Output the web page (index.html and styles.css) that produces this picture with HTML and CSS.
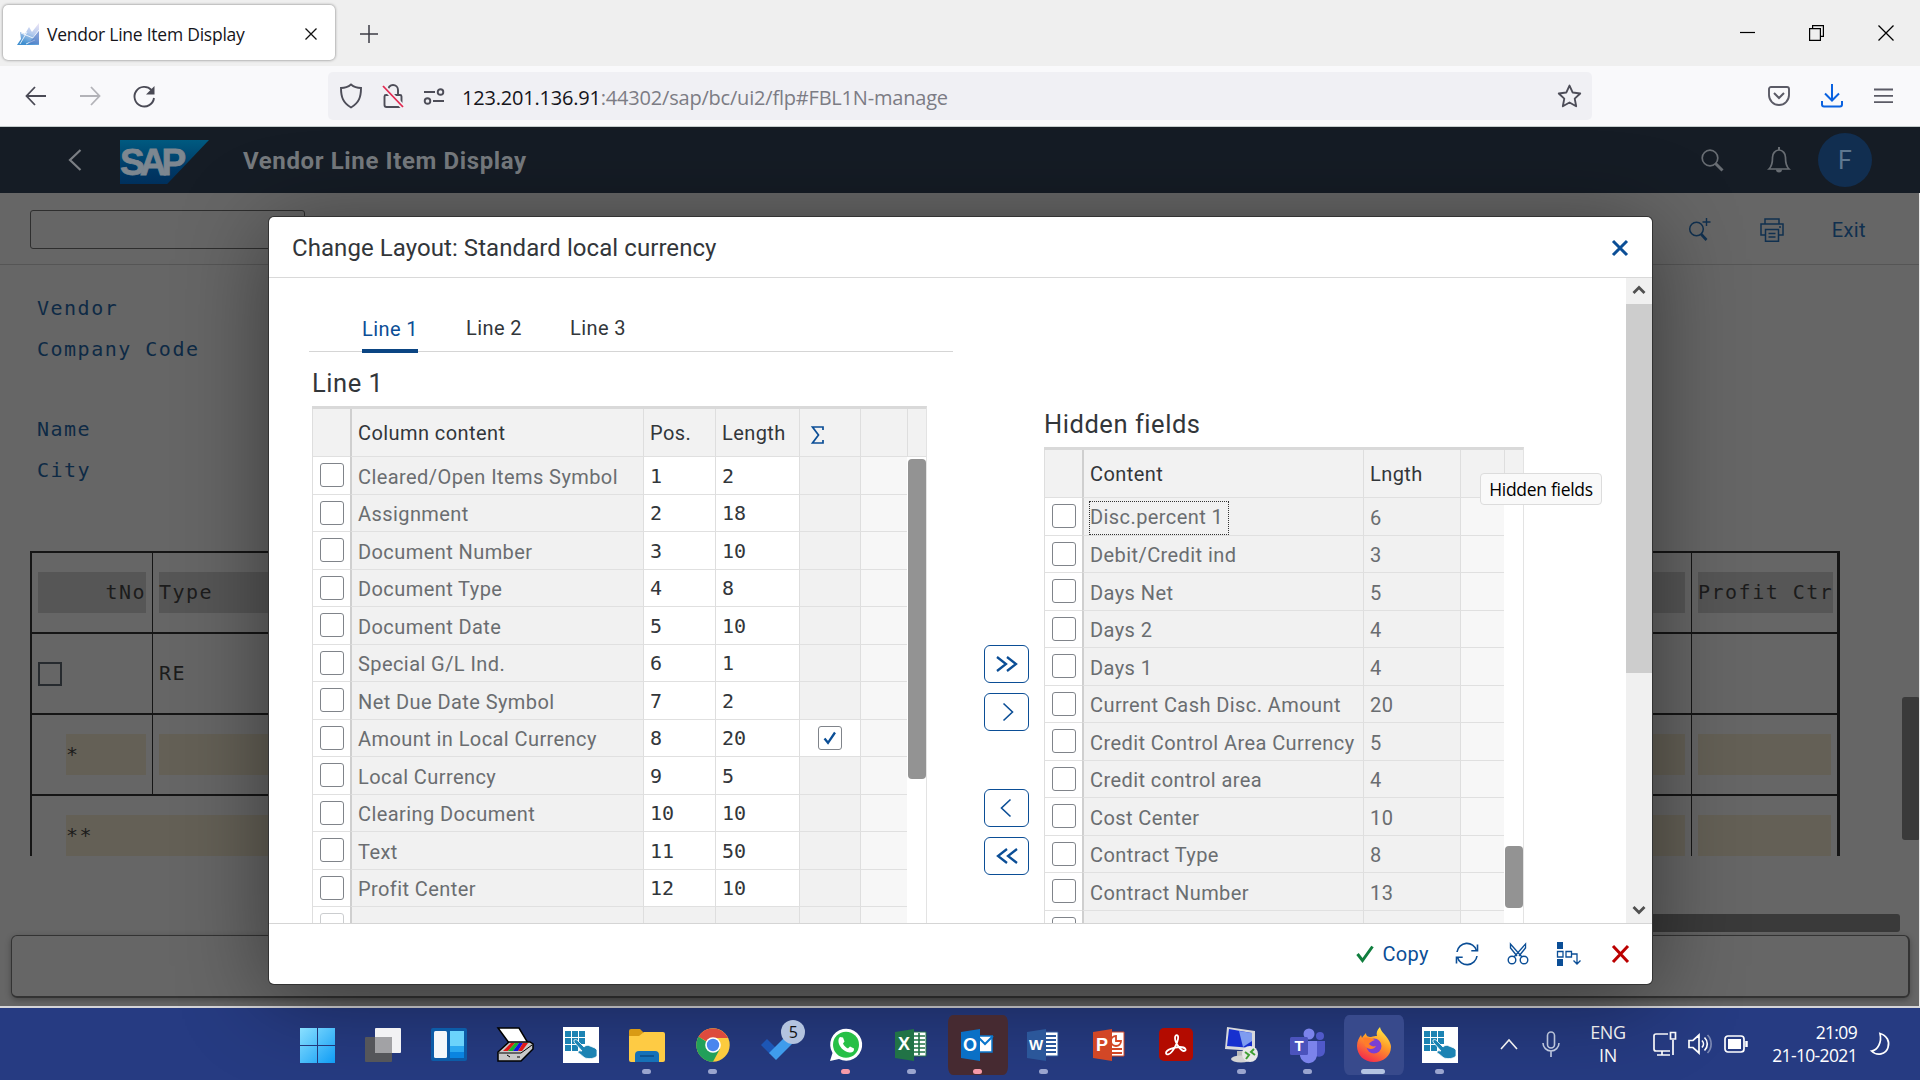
FILE: index.html
```html
<!DOCTYPE html>
<html lang="en">
<head>
<meta charset="utf-8">
<title>Vendor Line Item Display</title>
<link rel="stylesheet" href="styles.css">
</head>
<body>
<div class="tabstrip">
  <div class="tab">
    <svg class="favicon" width="24" height="22" viewBox="0 0 24 22"><defs><linearGradient id="fav" x1="0.9" y1="0" x2="0.5" y2="1"><stop offset="0" stop-color="#e9e2f5"/><stop offset=".5" stop-color="#b4cbee"/><stop offset="1" stop-color="#3f8fd0"/></linearGradient></defs><path d="M23 0v22H1l4-6-1-7 5 2 4-7 3 5z" fill="url(#fav)"/><path d="M4 21 11 9M5 10l12 5 6-8M10 21l9-4" fill="none" stroke="#fff" opacity=".8"/><path d="M23 8v13H12z" fill="#4a6fc0" opacity=".5"/></svg>
    <span class="tab-title">Vendor Line Item Display</span>
    <svg width="12" height="12" viewBox="0 0 12 12"><path d="M.5.5l11 11M11.500.5l-11 11" stroke="#111" stroke-width="1.3"/></svg>
  </div>
  <svg class="newtab" width="18" height="18" viewBox="0 0 18 18"><path d="M9 0v18M0 9h18" stroke="#3c3c46" stroke-width="1.5"/></svg>
  <div class="winbtns">
    <svg width="15" height="16" viewBox="0 0 15 16"><path d="M0 7.500h15" stroke="#000" stroke-width="1.200"/></svg>
    <svg width="15" height="16" viewBox="0 0 15 16"><path d="M.6 3.600h10.800v11.800H.6zM3.600 3.600V.6h10.800v10.800h-3" fill="none" stroke="#000" stroke-width="1.200"/></svg>
    <svg width="16" height="16" viewBox="0 0 16 16"><path d="M.5.5l15 15M15.500.5l-15 15" stroke="#000" stroke-width="1.300"/></svg>
  </div>
</div>
<div class="navbar">
  <svg width="22" height="20" viewBox="0 0 22 20" class="nav-ico"><path d="M21 10H1.500M10 1 1.500 10l8.500 9" fill="none" stroke="#4a4a55" stroke-width="1.800"/></svg>
  <svg width="22" height="20" viewBox="0 0 22 20" class="nav-ico faded"><path d="M1 10h19.500M12 1l8.500 9-8.500 9" fill="none" stroke="#4a4a55" stroke-width="1.800"/></svg>
  <svg width="24" height="24" viewBox="0 0 24 24" class="nav-ico reload"><path d="M18.500 5A9.800 9.800 0 1 0 21 13" fill="none" stroke="#4a4a55" stroke-width="1.900"/><path d="M21.500 1v8.500H13z" fill="#4a4a55"/></svg>
  <div class="urlbar">
    <svg width="24" height="26" viewBox="0 0 24 26"><path d="M12 1.500C9 4 5.500 5 2 5c0 9 2 15 10 19.500C20 20 22 14 22 5 18.500 5 15 4 12 1.500z" fill="none" stroke="#4d4d58" stroke-width="1.900"/></svg>
    <svg width="22" height="26" viewBox="0 0 22 26"><path d="M4 12h14a1.500 1.500 0 0 1 1.500 1.500V22a2 2 0 0 1-2 2H4.500a2 2 0 0 1-2-2v-8.500A1.500 1.500 0 0 1 4 12zM6 12V7a5 5 0 0 1 10 0v5" fill="none" stroke="#4d4d58" stroke-width="1.900"/><path d="M1 3l20 21" stroke="#f0f0f4" stroke-width="5"/><path d="M1 3l20 21" stroke="#e22850" stroke-width="1.800"/></svg>
    <svg width="22" height="18" viewBox="0 0 22 18"><g fill="none" stroke="#4d4d58" stroke-width="1.900"><path d="M1 5h11M10 14h11"/><circle cx="17.500" cy="5" r="2.800"/><circle cx="4.500" cy="14" r="2.800"/></g></svg>
    <div class="url"><b>123.201.136.91</b>:44302/sap/bc/ui2/flp#FBL1N-manage</div>
    <svg width="25" height="25" viewBox="0 0 24 24"><path d="M12 1.500l3.100 6.700 7.200.9-5.300 5 1.400 7.300L12 17.800l-6.400 3.600L7 14.100l-5.300-5 7.200-.9z" fill="none" stroke="#4d4d58" stroke-width="1.800" stroke-linejoin="round"/></svg>
  </div>
  <div class="nav-right">
    <svg width="22" height="20" viewBox="0 0 22 20"><path d="M3 1h16a2 2 0 0 1 2 2v6a10 10 0 0 1-20 0V3a2 2 0 0 1 2-2z" fill="none" stroke="#5b5b66" stroke-width="1.900"/><path d="M6 7l5 5 5-5" fill="none" stroke="#5b5b66" stroke-width="2"/></svg>
    <svg width="22" height="24" viewBox="0 0 22 24"><path d="M11 0v16M4 9.500l7 7 7-7M1 17v3.500a2 2 0 0 0 2 2h16a2 2 0 0 0 2-2V17" fill="none" stroke="#0a62e0" stroke-width="2"/></svg>
    <svg width="19" height="16" viewBox="0 0 19 16"><path d="M0 1.500h19M0 7.800h19M0 14.200h19" stroke="#5b5b66" stroke-width="1.800"/></svg>
  </div>
</div>

<div class="shell">
  <svg class="back" width="14" height="22" viewBox="0 0 14 22"><path d="M12.500 1 2 11l10.500 10" fill="none" stroke="#7b7f84" stroke-width="2.200"/></svg>
  <div class="logo"><span>SAP</span></div>
  <div class="shell-title">Vendor Line Item Display</div>
  <div class="shell-right">
    <svg width="24" height="24" viewBox="0 0 24 24"><circle cx="10" cy="10" r="7.800" fill="none" stroke="#686d73" stroke-width="1.700"/><path d="M15.500 15.500l7 7" stroke="#686d73" stroke-width="3"/></svg>
    <svg width="22" height="26" viewBox="0 0 22 26"><path d="M1 22h20c-3-3-3.500-6-3.500-11A6.500 7.500 0 0 0 11 3a6.500 7.500 0 0 0-6.500 8c0 5-.5 8-3.500 11z" fill="none" stroke="#686d73" stroke-width="1.700"/><path d="M11 0v3" stroke="#686d73" stroke-width="2"/><path d="M8 22.500h6a3 3 0 0 1-6 0z" fill="#686d73"/></svg>
    <div class="avatar">F</div>
  </div>
</div>

<div class="page">
  <div class="toolbar">
    <div class="cmd"></div>
    <div class="tools">
      <svg width="24" height="24" viewBox="0 0 24 24"><circle cx="8.500" cy="11" r="6.800" fill="none" stroke="#10304f" stroke-width="1.500"/><path d="M13 16l5.500 6" stroke="#10304f" stroke-width="2.600"/><path d="M18.500 0v8M14.500 4h8" stroke="#10304f" stroke-width="1.400"/></svg>
      <svg width="24" height="24" viewBox="0 0 24 24"><g fill="none" stroke="#10304f" stroke-width="1.500"><path d="M5 6V1h14v5M5 17H1V6h22v11h-4"/><path d="M5.500 11.500h13v11.700h-13zM8.500 15.500h7M8.500 19h7M19 9h2"/></g></svg>
      <span class="exit">Exit</span>
    </div>
  </div>
  <div class="form">
    <span>Vendor</span><span>Company Code</span><span></span><span>Name</span><span>City</span>
  </div>
  <div class="list">
    <div class="lrow"><div class="lc"><i class="chip head r">tNo</i></div><div class="lc"><i class="chip head">Type</i></div><div class="lc"><i class="chip head">Profit Ctr</i></div></div>
    <div class="lrow"><div class="lc"><i class="sq"></i></div><div class="lc"><i class="chip">RE</i></div><div class="lc"></div></div>
    <div class="lrow"><div class="lc in"><i class="chip sum">*</i></div><div class="lc"><i class="chip sum"></i></div><div class="lc"><i class="chip sum"></i></div></div>
    <div class="lrow last"><div class="lc in"><i class="chip sum">**</i></div><div class="lc"><i class="chip sum"></i></div></div>
  </div>
  <div class="hscroll"></div>
  <div class="msgbar"></div>
  <div class="vscroll"></div>
</div>

<div class="dialog">
  <div class="dlg-head"><span>Change Layout: Standard local currency</span>
    <svg width="18" height="18" viewBox="0 0 18 18"><path d="M2 2l14 14M16 2 2 16" stroke="#0b4e96" stroke-width="3"/></svg>
  </div>
  <div class="dlg-body">
    <div class="left">
      <div class="tabs"><span class="on">Line 1</span><span>Line 2</span><span>Line 3</span></div>
      <h2>Line 1</h2>
      <div class="tbl tl">
        <div class="row hd"><i></i><b>Column content</b><b>Pos.</b><b>Length</b><b class="sig"><svg width="13" height="18" viewBox="0 0 13 18"><path d="M12 4V1H1.500l6 8-6 8H12v-3" fill="none" stroke="#0b4e96" stroke-width="1.700"/></svg></b><b></b><b></b></div>
        <div class="row"><i><u></u></i><em>Cleared/Open Items Symbol</em><s>1</s><s>2</s><em></em><q></q></div>
        <div class="row"><i><u></u></i><em>Assignment</em><s>2</s><s>18</s><em></em><q></q></div>
        <div class="row"><i><u></u></i><em>Document Number</em><s>3</s><s>10</s><em></em><q></q></div>
        <div class="row"><i><u></u></i><em>Document Type</em><s>4</s><s>8</s><em></em><q></q></div>
        <div class="row"><i><u></u></i><em>Document Date</em><s>5</s><s>10</s><em></em><q></q></div>
        <div class="row"><i><u></u></i><em>Special G/L Ind.</em><s>6</s><s>1</s><em></em><q></q></div>
        <div class="row"><i><u></u></i><em>Net Due Date Symbol</em><s>7</s><s>2</s><em></em><q></q></div>
        <div class="row"><i><u></u></i><em>Amount in Local Currency</em><s>8</s><s>20</s><i class="chk"><u><svg width="14" height="14" viewBox="0 0 14 14"><path d="M1.500 7.500l3.500 4.300L12 1.500" fill="none" stroke="#0b4e96" stroke-width="2.300"/></svg></u></i><q></q></div>
        <div class="row"><i><u></u></i><em>Local Currency</em><s>9</s><s>5</s><em></em><q></q></div>
        <div class="row"><i><u></u></i><em>Clearing Document</em><s>10</s><s>10</s><em></em><q></q></div>
        <div class="row"><i><u></u></i><em>Text</em><s>11</s><s>50</s><em></em><q></q></div>
        <div class="row"><i><u></u></i><em>Profit Center</em><s>12</s><s>10</s><em></em><q></q></div>
        <div class="row off"><i><u></u></i><em></em><em></em><em></em><em></em><q></q></div>
        <div class="thumb t1"></div>
      </div>
    </div>
    <div class="mover">
      <div class="mbtn"><svg width="22" height="16" viewBox="0 0 22 16"><path d="M1 1l9 7-9 7M11 1l9 7-9 7" fill="none" stroke="#0b4e96" stroke-width="2.300"/></svg></div>
      <div class="mbtn"><svg width="12" height="18" viewBox="0 0 12 18"><path d="M2.500.5l9 8.500-9 8.500" fill="none" stroke="#0b4e96" stroke-width="1.600"/></svg></div>
      <div class="mbtn gap"><svg width="12" height="18" viewBox="0 0 12 18"><path d="M9.500.5l-9 8.500 9 8.500" fill="none" stroke="#0b4e96" stroke-width="1.600"/></svg></div>
      <div class="mbtn"><svg width="22" height="16" viewBox="0 0 22 16"><path d="M21 1l-9 7 9 7M11 1 2 8l9 7" fill="none" stroke="#0b4e96" stroke-width="2.300"/></svg></div>
    </div>
    <div class="right">
      <h2>Hidden fields</h2>
      <div class="tbl tr">
        <div class="row hd"><i></i><b>Content</b><b>Lngth</b><b></b><b></b></div>
        <div class="row"><i><u></u></i><em><span class="focus">Disc.percent 1</span></em><em>6</em><q></q></div>
        <div class="row"><i><u></u></i><em>Debit/Credit ind</em><em>3</em><q></q></div>
        <div class="row"><i><u></u></i><em>Days Net</em><em>5</em><q></q></div>
        <div class="row"><i><u></u></i><em>Days 2</em><em>4</em><q></q></div>
        <div class="row"><i><u></u></i><em>Days 1</em><em>4</em><q></q></div>
        <div class="row"><i><u></u></i><em>Current Cash Disc. Amount</em><em>20</em><q></q></div>
        <div class="row"><i><u></u></i><em>Credit Control Area Currency</em><em>5</em><q></q></div>
        <div class="row"><i><u></u></i><em>Credit control area</em><em>4</em><q></q></div>
        <div class="row"><i><u></u></i><em>Cost Center</em><em>10</em><q></q></div>
        <div class="row"><i><u></u></i><em>Contract Type</em><em>8</em><q></q></div>
        <div class="row"><i><u></u></i><em>Contract Number</em><em>13</em><q></q></div>
        <div class="row"><i><u></u></i><em></em><em></em><q></q></div>
        <div class="thumb t2"></div>
        <div class="tip">Hidden fields</div>
      </div>
    </div>
    <div class="sbar">
      <svg width="14" height="10" viewBox="0 0 14 10"><path d="M1.500 8 7 2.500 12.500 8" fill="none" stroke="#505050" stroke-width="2.800"/></svg>
      <div class="sthumb"></div>
      <svg width="14" height="10" viewBox="0 0 14 10"><path d="M1.500 2 7 7.500 12.500 2" fill="none" stroke="#505050" stroke-width="2.800"/></svg>
    </div>
  </div>
  <div class="dlg-foot">
    <svg width="18" height="18" viewBox="0 0 18 18"><path d="M1.500 9l5 6.500L16.500 1.500" fill="none" stroke="#107e3e" stroke-width="3"/></svg>
    <span class="copy">Copy</span>
    <svg class="f1" width="24" height="24" viewBox="0 0 24 24"><g fill="none" stroke="#0b4e96" stroke-width="1.600"><path d="M2 10A10 10 0 0 1 21.500 8.500M22 14A10 10 0 0 1 2.500 15.500"/><path d="M22.500 2.500v6.200h-6.200M1.500 21.500v-6.200h6.200"/></g></svg>
    <svg class="f2" width="22" height="22" viewBox="0 0 22 22"><g fill="none" stroke="#0b4e96" stroke-width="1.400"><circle cx="5" cy="17" r="3.800"/><circle cx="17" cy="17" r="3.800"/><path d="M7 14 18.500 1v4l-6.500 8M15 14 3.500 1v4l6.500 8"/></g></svg>
    <svg class="f3" width="25" height="24" viewBox="0 0 25 24"><path d="M1 0h6v7H1zM1 17h6v7H1z" fill="#0b4e96"/><path d="M1.500 9.500h5.500v5.500H1.500zM10 9.500h5.500v5.500H10zM16 12h5v9.500M17.500 18.500 21 22l3.500-3.500" fill="none" stroke="#0b4e96" stroke-width="1.300"/></svg>
    <svg class="f4" width="19" height="18" viewBox="0 0 18 18"><path d="M1.500 1l15 16M16.500 1l-15 16" stroke="#b00" stroke-width="3"/></svg>
  </div>
</div>

<div class="taskbar">
  <div class="apps">
    <div class="app"><svg width="36" height="36" viewBox="0 0 36 36"><defs><linearGradient id="win" x1="0" y1="0" x2="1" y2="1"><stop offset="0" stop-color="#8ae0ff"/><stop offset="1" stop-color="#0f9cf5"/></linearGradient></defs><path d="M1 1h17v17H1zM19 1h17v17H19zM1 19h17v17H1zM19 19h17v17H19z" fill="url(#win)"/></svg></div>
    <div class="app"><svg width="36" height="36" viewBox="0 0 36 36"><rect x="10" y="1" width="26" height="25" rx="1" fill="#f2f2f4"/><rect x="0" y="10" width="27" height="25" rx="1" fill="#55565a"/><rect x="10" y="10" width="17" height="16" fill="#a2a2a5"/></svg></div>
    <div class="app"><svg width="36" height="36" viewBox="0 0 36 36"><rect y="1" width="36" height="33" rx="2" fill="#0c5ca8"/><rect x="3" y="4" width="13" height="27" rx="1.500" fill="#f4f7fa"/><rect x="19" y="4" width="14" height="15" fill="#6bd3fb"/><rect x="19" y="19" width="14" height="6" fill="#2ba8f0"/><rect x="19" y="25" width="14" height="6" fill="#0a84e0"/></svg></div>
    <div class="app"><svg width="36" height="36" viewBox="0 0 36 36"><path d="M1 1h21l9 15H12z" fill="#fff" stroke="#000" stroke-width="1.500"/><path d="M1 25 12 15h21l3 2v5L24 34H1z" fill="#c8c8c8" stroke="#000" stroke-width="1.500"/><path d="M6 24l8-8h4l-7 8z" fill="#e01818"/><path d="M11 24l7-8h4l-6 8z" fill="#17b52c"/><path d="M16 24l6-8h4l-5 8z" fill="#1313e0"/><path d="M21 24l5-8h5l-6 8z" fill="#e01818"/><path d="M2 26h22l11-8M20 30h3M10 28l3 2" stroke="#000" fill="none"/></svg></div>
    <div class="app"><svg width="36" height="36" viewBox="0 0 36 36"><use href="#touch"/></svg></div>
    <div class="app dot"><svg width="36" height="36" viewBox="0 0 36 36"><path d="M0 4a2 2 0 0 1 2-2h9l4 4v6H0z" fill="#d99a14"/><path d="M0 9h10l5-4h19a2 2 0 0 1 2 2v26a2 2 0 0 1-2 2H2a2 2 0 0 1-2-2z" fill="#fecb44"/><path d="M6 35v-7a4 4 0 0 1 4-4h16a4 4 0 0 1 4 4v7z" fill="#1671b8"/><path d="M11 29h14" stroke="#0d4b85" stroke-width="1.500"/></svg></div>
    <div class="app dot"><svg width="36" height="36" viewBox="0 0 36 36"><circle cx="18" cy="18" r="16.700" fill="#fccb3e"/><path d="M18 18 3.500 9.700A16.700 16.700 0 0 1 32.500 10L33 11H18z" fill="#dd4b3e"/><path d="M3.500 9.700A16.700 16.700 0 0 0 18 34.700l7-13-7-3z" fill="#22a05a"/><circle cx="18" cy="18" r="7.800" fill="#fff"/><circle cx="18" cy="18" r="6.200" fill="#4a86ee"/></svg></div>
    <div class="app"><svg width="36" height="36" viewBox="0 0 36 36"><path d="M0 18l6-6 9 9-6 6z" fill="#1d56b5"/><path d="M8 26 27 7l8 6L15 33z" fill="#3f9cec"/></svg><span class="badge">5</span></div>
    <div class="app dot red"><svg width="36" height="36" viewBox="0 0 36 36"><path d="M2 34l2.500-8A16 16 0 1 1 11 32z" fill="#fff"/><circle cx="18" cy="17.700" r="13" fill="#27c046"/><path d="M12 10l3 .5 1.500 4-1.500 2c1 2.500 3 4 5 5l2-2 4 2c.5 3-2 4.500-4.500 4C15 24.500 11 19 10.500 15c-.3-2.500.5-4.500 1.500-5z" fill="#fff"/></svg></div>
    <div class="app dot"><svg width="36" height="36" viewBox="0 0 36 36"><path d="M18 5h14v24H18z" fill="#fff" stroke="#217346"/><path d="M20 9h11M20 13h11M20 17h11M20 21h11M20 25h11M25 6v22" stroke="#217346" stroke-width="1.600"/><path d="M1 5l19-3v32L1 31z" fill="#217346"/><text x="10" y="23" class="ic">X</text></svg></div>
    <div class="app dot red outlook"><svg width="36" height="36" viewBox="0 0 36 36"><path d="M18 9h14v16H18z" fill="#fff" stroke="#0a76cc" stroke-width="1.500"/><path d="M18 10l7 7 8-8" fill="none" stroke="#0a76cc" stroke-width="2"/><path d="M1 5l19-3v32L1 31z" fill="#0a70c6"/><text x="10" y="24" class="ic">O</text></svg></div>
    <div class="app dot"><svg width="36" height="36" viewBox="0 0 36 36"><path d="M18 5h14v24H18z" fill="#fff" stroke="#2b579a"/><path d="M20 9h10M20 13h10M20 17h10M20 21h10M20 25h10" stroke="#2b579a" stroke-width="2"/><path d="M1 5l19-3v32L1 31z" fill="#2b579a"/><text x="10" y="23" class="ic sm">W</text></svg></div>
    <div class="app"><svg width="36" height="36" viewBox="0 0 36 36"><path d="M18 5h14v24H18z" fill="#fff" stroke="#d24726"/><path d="M24 9a5 5 0 1 0 5 5h-5zM20 22h10M20 26h10" fill="none" stroke="#d24726" stroke-width="1.800"/><path d="M1 5l19-3v32L1 31z" fill="#d24726"/><text x="10" y="24" class="ic">P</text></svg></div>
    <div class="app"><svg width="36" height="36" viewBox="0 0 36 36"><rect x="1" y="1" width="34" height="33" rx="5" fill="#b30b00"/><path d="M8 26c0-3 8-6 14-6s7 4 4 4-9-8-9-13c0-4 4-4 3 1-1 6-6 14-9 15-2 1-3 0-3-1z" fill="none" stroke="#fff" stroke-width="1.800"/></svg></div>
    <div class="app dot"><svg width="36" height="36" viewBox="0 0 36 36"><path d="M3 0l28 4v20L1 22z" fill="#d8d9dc"/><path d="M5 2l23 4v15L3 19z" fill="#1730cf"/><path d="M15 4l13 2v8L19 20z" fill="#7f9cf0"/><path d="M13 24h9v6H13z" fill="#bbb"/><ellipse cx="17" cy="32" rx="10" ry="3.500" fill="#d3d3d3"/><circle cx="26" cy="27" r="8" fill="#e8e8e8"/><path d="M21 25l4 3-3 4M30 22l-3 3 4 3" stroke="#3fa034" fill="none" stroke-width="2"/></svg></div>
    <div class="app dot"><svg width="36" height="36" viewBox="0 0 36 36"><circle cx="19" cy="7" r="5.500" fill="#7b83eb"/><circle cx="30" cy="9" r="4" fill="#5059c9"/><path d="M24 14h11v10a6 6 0 0 1-9 5z" fill="#5059c9"/><path d="M10 14h17v12a8 8 0 0 1-17 3z" fill="#7b83eb"/><rect x="0" y="10" width="18" height="18" rx="1.500" fill="#4b53bc"/><text x="9" y="24" class="ic sm">T</text></svg></div>
    <div class="app dot wide active"><svg width="36" height="36" viewBox="0 0 36 36"><defs><linearGradient id="ff" x1=".8" y1="0" x2=".3" y2="1"><stop offset="0" stop-color="#fff04a"/><stop offset=".45" stop-color="#ff9a28"/><stop offset="1" stop-color="#f4284d"/></linearGradient></defs><path d="M18 35C8 35 1 28 1 19c0-5 2-8 4-11l1 3c1-2 3-4 4-5 0 3 2 4 5 4 3-1 4-1 6-1-1-3 0-6 3-9 1 5 5 7 8 12 2 3 3 6 3 8 0 9-8 15-17 15z" fill="url(#ff)"/><circle cx="18" cy="19" r="7.500" fill="#7a3fd4"/><path d="M7 11c4-1 9 0 12 2-3 1-5 2-6 4 2 2 4 3 7 2-2 4-8 4-11 0z" fill="#ff7d2a"/></svg></div>
    <div class="app dot"><svg width="36" height="36" viewBox="0 0 36 36"><g id="touch"><path d="M0 0h36v36H0z" fill="#fff"/><path d="M2 4h6v6H2zM9 4h6v6H9zM16 4h6v6h-6zM2 11h6v6H2zM9 11h6v6H9zM16 11h6v6h-6zM2 18h6v6H2zM9 18h6v6H9z" fill="#1c83b3"/><path d="M11 13c2-1 3 0 4 1l6 6c2-2 4-2 6-1l5 2 2 2v6c-3 3-8 3-12 2-3-2-4-4-7-5 0-3 2-2 4-2l-8-9z" fill="#1c83b3" stroke="#fff" stroke-width=".8"/></g></svg></div>
  </div>
  <div class="tray">
    <svg width="18" height="12" viewBox="0 0 18 12"><path d="M1 11l8-9 8 9" fill="none" stroke="#fff" stroke-width="1.600"/></svg>
    <svg width="18" height="26" viewBox="0 0 18 26"><rect x="5.500" y="1" width="7" height="16" rx="3.500" fill="none" stroke="#c9d3ea" stroke-width="1.600"/><path d="M1 12a8 8 0 0 0 16 0M9 20v6" fill="none" stroke="#c9d3ea" stroke-width="1.600"/></svg>
    <div class="lang">ENG<br>IN</div>
    <svg width="26" height="26" viewBox="0 0 26 26"><g fill="none" stroke="#fff" stroke-width="1.700"><path d="M16 3H4a2 2 0 0 0-2 2v13a2 2 0 0 0 2 2h14M10 20v4M5 24h13M21 9v15M18.500 1.500h5V8h-5z"/></g></svg>
    <svg width="24" height="24" viewBox="0 0 24 24"><g fill="none" stroke="#fff" stroke-width="1.700"><path d="M1 8.500v7h4l6 5.500V3L5 8.500zM14 8.500a5 5 0 0 1 0 7M16.500 5.500a9 9 0 0 1 0 13"/><path d="M19.500 3a13 13 0 0 1 0 18" opacity=".4"/></g></svg>
    <svg width="25" height="18" viewBox="0 0 25 18"><rect x="1" y="1" width="19" height="16" rx="3" fill="none" stroke="#fff" stroke-width="1.700"/><rect x="4" y="4" width="13" height="10" fill="#fff"/><path d="M22.500 6v6" stroke="#fff" stroke-width="2.500"/></svg>
    <div class="clock">21:09<br>21-10-2021</div>
    <svg width="20" height="24" viewBox="0 0 20 24"><path d="M10 1.500c7 2 10 8 8 14-2 7-11 9-16.500 3.500C8 18 12 10 10 1.500z" fill="none" stroke="#fff" stroke-width="1.700"/></svg>
  </div>
</div>
</body>
</html>
```
FILE: styles.css
```css
* { box-sizing: border-box; }
body { margin: 0; width: 1920px; height: 1080px; overflow: hidden; position: relative; font-family: Roboto, "Liberation Sans", sans-serif; font-size: 20px; color: #32363a; background: #fff; }
svg { display: block; flex: none; overflow: visible; }
i, em, s, u, q { font-style: normal; text-decoration: none; quotes: none; }
q::before, q::after { content: none; }

/* browser window */
.tabstrip { height: 66px; background: #efefef; display: flex; align-items: center; padding-left: 3px; font-family: "Open Sans", sans-serif; }
.tab { width: 332px; height: 55px; margin-top: -1px; background: #fff; border-radius: 5px; box-shadow: 0 0 3px rgba(0,0,0,.5); display: flex; align-items: center; padding: 2px 18px 0 13px; }
.tab-title { flex: 1; margin-left: 7px; font-size: 17.5px; letter-spacing: -.24px; color: #15141a; white-space: nowrap; }
.newtab { margin: 2px 0 0 25px; }
.winbtns { margin-left: auto; display: flex; gap: 54px; padding-right: 26px; }
.navbar { height: 61px; background: #f9f9fb; border-bottom: 1px solid #c4cccc; display: flex; align-items: center; padding-left: 25px; }
.nav-ico { margin-right: 32px; }
.reload { margin-top: 2px; }
.faded { opacity: .4; }
.urlbar { width: 1264px; height: 48px; margin-left: 139px; background: #f0f0f4; border-radius: 5px; display: flex; align-items: center; padding: 0 10px 0 11px; gap: 19px; }
.url { flex: 1; font: 20px "Open Sans", sans-serif; letter-spacing: -.2px; color: #7c7c84; margin-left: -2px; padding-top: 2px; }
.url b { font-weight: 400; color: #15141a; }
.nav-right { margin-left: auto; display: flex; align-items: center; gap: 31px; padding-right: 27px; }

/* dimmed shell header */
.shell { height: 66px; background: #151c25; display: flex; align-items: center; padding: 0 48px 0 68px; }
.logo { width: 89px; height: 44px; margin: 4px 0 0 38px; background: linear-gradient(#005a80, #003764 70%, #00305c); clip-path: polygon(0 0, 100% 0, 53% 100%, 0 100%); font: 900 37px/45px "Liberation Sans", sans-serif; color: #7d8790; letter-spacing: -5px; -webkit-text-stroke: .8px #7d8790; }
.shell-title { margin-left: 34px; font-size: 24px; font-weight: 700; letter-spacing: .62px; color: #767a7e; padding-top: 2px; }
.shell-right { margin-left: auto; display: flex; align-items: center; gap: 44px; }
.avatar { width: 54px; height: 54px; border-radius: 50%; background: #112e50; color: #5f7890; display: flex; align-items: center; justify-content: center; font-size: 25px; margin-left: -16px; }

/* dimmed page */
.page { height: 815px; background: #666; border-right: 1px solid #e8e8e8; border-bottom: 2px solid #d5d5d8; position: relative; display: flex; flex-direction: column; overflow: hidden; }
.toolbar { height: 72px; border-bottom: 1px solid #555; display: flex; align-items: center; padding: 2px 53px 0 30px; flex: none; }
.cmd { width: 275px; height: 39px; border: 1px solid #2e2e2e; border-radius: 3px; }
.tools { margin-left: auto; display: flex; align-items: center; gap: 48px; color: #10304f; }
.exit { letter-spacing: .4px; }
.form { flex: none; margin: 23px 0 0 37px; display: grid; grid-auto-rows: 40.4px; height: 263px; align-content: start; align-items: center; font: 20px "DejaVu Sans Mono", monospace; letter-spacing: 1.5px; color: #0e2a45; }
.list { flex: none; width: 1810px; height: 305px; margin-left: 30px; overflow: hidden; border: 2px solid #151515; border-width: 2px 3px 0 2px; font: 20px "DejaVu Sans Mono", monospace; letter-spacing: 1.5px; color: #1c1c1c; }
.lrow { height: 81px; display: grid; grid-template-columns: 120px 1539px 1fr; border-bottom: 2px solid #151515; }
.lc { padding: 0 6px; display: flex; align-items: center; border-left: 1.500px solid #151515; }
.lc:first-child { border-left: 0; padding-left: 6px; }
.lc.in:first-child { padding-left: 34px; }
.chip { flex: 1; height: 41px; line-height: 41px; white-space: nowrap; }
.chip.head { background: #565656; }
.chip.r { text-align: right; }
.chip.sum { background: #646056; }
.last { grid-template-columns: 1659px 1fr; }
.sq { width: 24px; height: 24px; border: 2px solid #262a2e; }
.hscroll { flex: none; width: 1500px; height: 18px; margin: 58px 0 3px 400px; border-radius: 3px; background: #3a3a3a; }
.msgbar { flex: none; width: 1899px; height: 63px; margin-left: 11px; border: 2px solid #333; border-width: 1px 2px 2px 1px; border-radius: 6px; box-shadow: 0 2px 6px rgba(0,0,0,.3); }
.vscroll { position: absolute; right: -1px; top: 504px; width: 18px; height: 143px; border-radius: 3px; background: #3a3a3a; }

/* dialog */
.dialog { position: absolute; left: 269px; top: 217px; width: 1383px; height: 767px; background: #fff; border-radius: 5px; overflow: visible; box-shadow: 0 0 0 1px #333, 0 12px 90px rgba(0,0,0,.45); display: flex; flex-direction: column; }
.dlg-head { height: 61px; border-bottom: 1px solid #d9d9d9; display: flex; align-items: center; justify-content: space-between; padding: 1px 23px 0; font-size: 24px; letter-spacing: .07px; }
.dlg-body { height: 645px; overflow: hidden; display: flex; letter-spacing: .42px; }
.left { width: 684px; padding-left: 40px; }
.tabs { height: 74px; display: flex; gap: 48px; padding-left: 53px; border-bottom: 1px solid #d5d5d5; }
.tabs span { padding-top: 38px; width: 56px; white-space: nowrap; }
.tabs .on { color: #0b4e96; border-bottom: 4px solid #0b4583; height: 75px; padding-top: 39px; }
h2 { margin: 0; font-weight: 400; font-size: 25.5px; line-height: 30px; letter-spacing: .55px; }
.left h2 { margin: 16px 0 8px 3px; }
.tbl { position: relative; border-top: 3px solid #d9d9d9; border-right: 1px solid #e3e3e3; height: 700px; }
.tl { width: 615px; margin-left: 3px; }
.row { display: grid; height: 37.5px; }
.tl .row { grid-template-columns: 38px 293px 72px 84px 61px 47px 19px; }
.tr .row { grid-template-columns: 38px 281px 97px 44px 19px; }
.row > * { border-left: 1px solid #dedede; border-bottom: 1px solid #e0e0e0; display: flex; align-items: center; white-space: nowrap; min-width: 0; }
.row > :nth-child(2) { border-left: 2px solid #cfcfcf; }
.row.hd { height: 48px; }
.hd > * { background: #f2f2f2; font-weight: 400; padding-left: 6px; }
.hd > .sig { padding: 4px 0 0 11px; }
.row em { background: #f1f1f1; color: #6a6d70; padding: 3px 0 0 6px; }
.row s { font: 20px "DejaVu Sans Mono", monospace; letter-spacing: 0; padding: 1px 0 0 6px; }
.row q { background: #f7f7f7; }
.row > i { justify-content: center; }
.row u { width: 24px; height: 24px; border: 1px solid #80848a; border-radius: 3px; background: #fff; display: flex; align-items: center; justify-content: center; }
.off u { opacity: .4; }
.thumb { position: absolute; background: #939393; width: 18px; border-radius: 4px; right: 0; }
.t1 { top: 50px; height: 320px; }
.t2 { top: 396px; height: 62px; }
.mover { width: 76px; padding: 367px 0 0 31px; display: flex; flex-direction: column; gap: 10px; }
.mbtn { width: 45px; height: 38px; border: 1.500px solid #0b4e96; border-radius: 6px; display: flex; align-items: center; justify-content: center; }
.mbtn.gap { margin-top: 48px; }
.right { width: 597px; padding: 131px 0 0 15px; }
.right h2 { margin-bottom: 8px; }
.tr { width: 480px; }
.focus { outline: 1px dotted #333; padding: 3px 5px 4px 0; line-height: 25px; }
.tip { position: absolute; left: 436px; top: 23px; width: 122px; height: 32px; background: #f9f9f9; border: 1px solid #dcdcdc; border-radius: 4px; font: 17.500px/31px "Open Sans", sans-serif; letter-spacing: -.3px; color: #000; text-align: center; white-space: nowrap; }
.sbar { width: 26px; background: #f0f0f0; display: flex; flex-direction: column; align-items: center; padding: 7px 0 8px; }
.sthumb { width: 26px; height: 369px; margin: 9px 0 auto; background: #cdcdcd; }
.dlg-foot { height: 61px; border-top: 1px solid #d5d5d5; display: flex; align-items: center; justify-content: flex-end; padding-right: 22px; color: #0b4e96; }
.copy { margin: 0 26px 0 8px; letter-spacing: .4px; }
.f2 { margin-left: 28px; }
.f3 { margin-left: 27px; }
.f4 { margin-left: 30px; }

/* taskbar */
.taskbar { height: 72px; background: #263b82; display: flex; color: #fff; }
.apps { display: flex; padding-left: 284px; width: 1500px; }
.app { width: 66.070px; height: 60px; margin-top: 7px; display: flex; align-items: center; justify-content: center; position: relative; flex: none; }
.dot::after { content: ""; position: absolute; bottom: 1px; left: 28px; width: 9px; height: 5px; border-radius: 3px; background: #9aa5cf; }
.red::after { background: #f79aa8; }
.wide::after { width: 24px; left: 20px; background: #b4c4e2; }
.outlook, .active { background-clip: content-box; padding: 0 3px; border-radius: 8px; }
.outlook { background: linear-gradient(#462a31, #462a31) content-box; }
.active { background-color: #384a8c; }
.badge { position: absolute; left: 35px; top: 5px; width: 24px; height: 24px; border-radius: 50%; background: #b3c3df; color: #111; font: 16px/24px "Open Sans", sans-serif; text-align: center; }
.ic { font: 700 18px "Liberation Sans", sans-serif; fill: #fff; text-anchor: middle; }
.ic.sm { font-size: 15px; }
.tray { display: flex; align-items: center; font: 18px/23.500px "Open Sans", sans-serif; letter-spacing: -.4px; }
.tray > svg:nth-child(2) { margin-left: 24px; }
.lang { width: 40px; margin: 0 24px 0 28px; text-align: center; }
.tray > svg:nth-child(5) { margin-left: 10px; }
.tray > svg:nth-child(6) { margin-left: 12px; }
.clock { width: 108px; text-align: right; white-space: nowrap; margin-right: 13px; font-size: 17.500px; letter-spacing: -.65px; }
```
